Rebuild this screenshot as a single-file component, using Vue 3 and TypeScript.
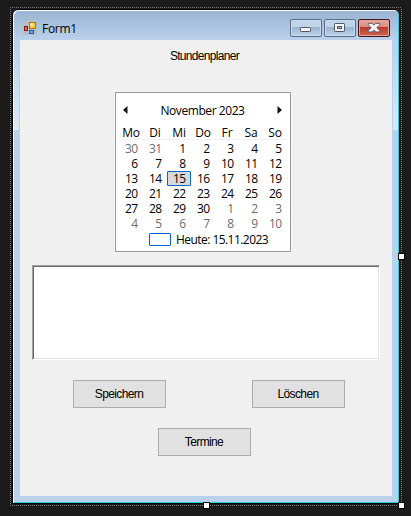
<script setup lang="ts">
interface Day { n: number; muted: boolean; today: boolean }

const weekdays: string[] = ['Mo', 'Di', 'Mi', 'Do', 'Fr', 'Sa', 'So']
const days: Day[] = Array.from({ length: 42 }, (_, i) => {
  const date = new Date(2023, 9, 30 + i)
  return {
    n: date.getDate(),
    muted: date.getMonth() !== 10,
    today: date.getMonth() === 10 && date.getDate() === 15,
  }
})
</script>

<template>
  <div class="designer">
    <div class="selection">
      <div class="window">
        <div class="edge left"></div>
        <div class="edge right"></div>
        <header class="titlebar">
          <svg class="app-icon" width="14" height="14" viewBox="0 0 14 14" shape-rendering="crispEdges">
            <rect x=".5" y=".5" width="13" height="13" fill="#b5bfcb" stroke="#bdbdbd" />
            <rect x="1" y="5" width="4" height="5" fill="#8e160c" />
            <rect x="2" y="6" width="2" height="3" fill="#e26b55" />
            <rect x="6" y="1" width="7" height="7" fill="#a47900" />
            <rect x="7" y="2" width="5" height="5" fill="#f8ca3d" />
            <rect x="7" y="2" width="3" height="3" fill="#ffe78c" />
            <rect x="6" y="9" width="5" height="4" fill="#2854ad" />
            <rect x="7" y="10" width="3" height="2" fill="#75a3f3" />
          </svg>
          <h1 class="title">Form1</h1>
          <div class="controls">
            <button class="control" aria-label="Minimieren">
              <svg width="30" height="16" viewBox="0 0 30 16">
                <rect x="9.5" y="7.5" width="10" height="4" rx=".7" fill="#f5f5f5" stroke="#535666" />
              </svg>
            </button>
            <button class="control" aria-label="Maximieren">
              <svg width="30" height="16" viewBox="0 0 30 16">
                <rect x="9.5" y="3.5" width="10" height="8" rx=".7" fill="#f5f5f5" stroke="#535666" />
                <rect x="12.5" y="6.5" width="4" height="2" fill="#9bb5d1" stroke="#535666" />
              </svg>
            </button>
            <button class="control close" aria-label="Schließen">
              <svg width="30" height="16" viewBox="0 0 30 16">
                <path d="M9.3 3.4h4l1.7 1.8 1.7-1.8h4v1.5l-2.8 2.8 2.8 2.8v1.4h-4L15 10.1l-1.7 1.8h-4v-1.4l2.8-2.8-2.8-2.8z" fill="#f6f6f6" stroke="#535666" stroke-width=".9" />
              </svg>
            </button>
          </div>
        </header>
        <main class="client">
          <p class="heading">Stundenplaner</p>
          <section class="calendar">
            <div class="month">
              <svg width="5" height="8" viewBox="0 0 5 8"><path d="M4.5 0v8L0 4z" fill="#111" /></svg>
              <span>November 2023</span>
              <svg width="5" height="8" viewBox="0 0 5 8"><path d="M.5 0v8L5 4z" fill="#111" /></svg>
            </div>
            <div class="weekdays"><span v-for="d in weekdays" :key="d">{{ d }}</span></div>
            <div class="days">
              <span v-for="(d, i) in days" :key="i" :class="{ muted: d.muted, today: d.today }">{{ d.n }}</span>
            </div>
            <div class="today-line"><i></i><span>Heute: 15.11.2023</span></div>
          </section>
          <textarea class="notes" aria-label="Notizen"></textarea>
          <div class="row"><button class="btn">Speichern</button><button class="btn">Löschen</button></div>
          <div class="row single"><button class="btn">Termine</button></div>
        </main>
      </div>
      <i class="handle east"></i>
      <i class="handle south"></i>
      <i class="handle corner"></i>
    </div>
  </div>
</template>

<style>
body { background: #1b1b1b; overflow: hidden; }
</style>

<style scoped>
* { box-sizing: border-box; }
.designer {
  width: 411px; height: 516px; padding: 7px 9px 10px 10px;
  background: #1b1b1b; color: #000;
  font-family: "Liberation Sans", sans-serif;
}
.selection {
  position: relative; width: 392px; height: 499px; padding: 2px;
  background:
    repeating-linear-gradient(90deg, #777 0 1px, #1b1b1b 1px 2px) 0 0 / 100% 1px no-repeat,
    repeating-linear-gradient(90deg, #777 0 1px, #1b1b1b 1px 2px) 0 100% / 100% 1px no-repeat,
    repeating-linear-gradient(#777 0 1px, #1b1b1b 1px 2px) 0 0 / 1px 100% no-repeat,
    repeating-linear-gradient(#777 0 1px, #1b1b1b 1px 2px) 100% 0 / 1px 100% no-repeat;
}
.window {
  position: relative; width: 388px; height: 495px;
  border: 1px solid #050505;
  border-radius: 6px 6px 0 0;
  background: linear-gradient(#9ab4d2, #b9d1ea 30px) #b9d1ea;
  box-shadow: inset 1px 1px #fff, inset -1px -1px #25cde0;
  padding: 1px 7px 7px;
}
.edge {
  position: absolute; top: 30px; width: 5px; height: 90px;
  background: linear-gradient(#b9d1ea, #dce8f5);
}
.edge.left { left: 1px; }
.edge.right { right: 1px; }
.titlebar { display: flex; height: 29px; padding-left: 3px; }
.app-icon { margin-top: 10px; }
.title { margin: 9px 0 0 5px; font: 12px/18px "Open Sans", sans-serif; letter-spacing: -.3px; }
.controls { display: flex; gap: 2px; margin: 8px 2px 0 auto; }
.control {
  width: 32px; height: 18px; padding: 0; border: 1px solid #5d6b85; border-radius: 2px;
  background: linear-gradient(#c0d4e9 0 43%, #98b1cc 44%, #bdd5ec);
  box-shadow: inset 0 0 0 1px #c9ddf1;
}
.control svg { display: block; }
.control.close {
  border-color: #431422;
  background: linear-gradient(#e8a299 0 8%, #da8c80 43%, #b83a28 44%, #d0654f);
  box-shadow: inset 0 0 0 1px #e1a298;
}
.client {
  display: flex; flex-direction: column; width: 372px; height: 456px; background: #f0f0f0;
}
.heading { margin: 8px 0 0; padding-right: 3px; text-align: center; font-size: 12px; line-height: 16px; letter-spacing: -.68px; }
.calendar {
  width: 176px; height: 160px; margin: 28px 0 0 95px; padding: 9px 3px 0;
  border: 1px solid #999; box-shadow: 0 0 0 1px #f8f8f8; background: #fff;
  font: 12px/15px "Open Sans", sans-serif; letter-spacing: -.15px;
}
.month { display: flex; justify-content: space-between; height: 18px; padding: 0 5px 0 4px; line-height: 18px; letter-spacing: -.43px; }
.month svg { margin-top: 4px; }
.weekdays, .days { display: grid; grid-template-columns: repeat(7, 24px); }
.weekdays { height: 20px; border-bottom: 1px solid #f0f0f0; margin-bottom: 1px; padding-top: 5px; text-align: center; line-height: 15px; }
.days { grid-auto-rows: 15px; text-align: right; letter-spacing: -.6px; line-height: 15px; }
.days span { padding-right: 5.5px; }
.days .muted { color: #6d6d6d; }
.days .today { padding-right: 4.5px; line-height: 13px; border: 1px solid #0066cc; border-radius: 1px; background: #d9d9d9; }
.today-line { display: flex; align-items: center; gap: 5px; height: 16px; padding-left: 30px; letter-spacing: -.55px; }
.today-line i { width: 22px; height: 13px; border: 1px solid #0066cc; border-radius: 1px; }
.notes {
  display: block; flex: none; width: 348px; height: 95px; margin: 13px 0 0 12px; padding: 2px; resize: none;
  background: #fff; border: 1px solid; border-color: #a0a0a0 #fff #fff #a0a0a0;
  box-shadow: inset 1px 1px #696969, inset -1px -1px #e3e3e3;
}
.row { display: flex; gap: 86px; margin: 20px 0 0 53px; }
.row.single { margin-left: 138px; }
.btn {
  width: 93px; height: 28px; padding: 0 1px 0 0; border: 1px solid #adadad; background: #e1e1e1;
  color: #000; font: 12px/26px "Liberation Sans", sans-serif; letter-spacing: -.62px;
}
.handle { position: absolute; width: 7px; height: 7px; border: 1px solid #000; background: #fff; }
.east { right: -3px; top: 246px; }
.south { left: 193px; bottom: -3px; }
.corner { right: -3px; bottom: -3px; }
</style>
